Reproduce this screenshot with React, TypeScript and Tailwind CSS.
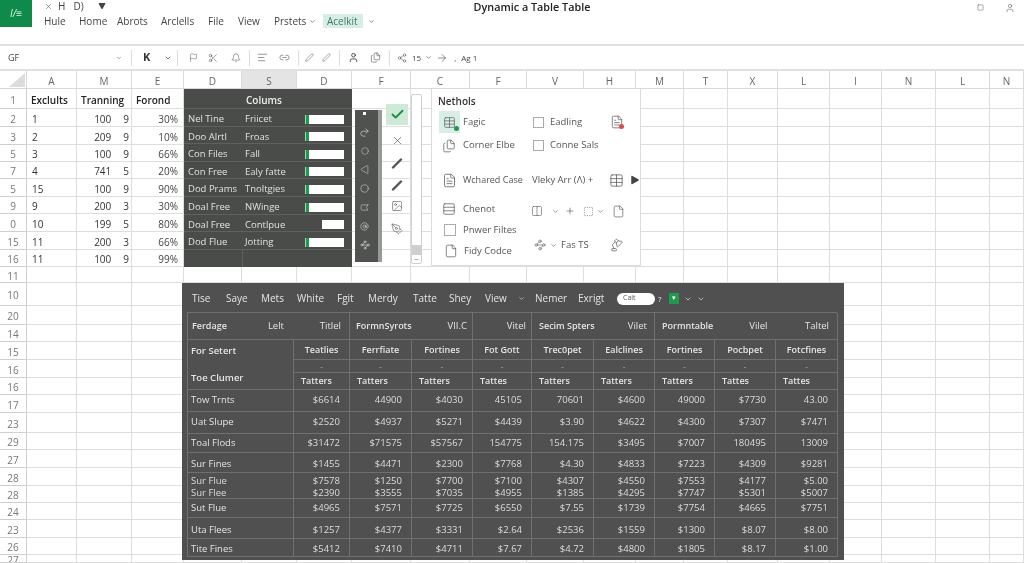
import React from "react";
import {
  AtSign, Check, ChevronDown, Circle, Columns2, File, FileText, Files, Flag, Image, LampDesk, Pen, PenTool,
  Plus, Redo2, Share2, SquareDashed, Table, Triangle, X, ArrowRight, AlignLeft, Link2, Scissors, User,
  Waypoints, Bell, Minus, Square, Bookmark, Rows3,
} from "lucide-react";

const letters = ["A","M","E","D","S","D","F","C","F","V","H","M","T","X","L","I","N","L","N"];
const labels = ["1","2","3","5","7","5","9","0","15","16","11","10","20","14","15","16","16","17","23","29","27","28","28","24","23","26","27"];
const sheet: string[][] = [
  ["Exclults","Tranning","Forond"],
  ["1","100|9","30%"],["2","209|9","10%"],["3","100|9","66%"],["4","741|5","20%"],
  ["15","100|9","90%"],["9","200|3","30%"],["10","199|5","80%"],["11","200|3","66%"],["11","100|9","99%"],
];

const panelRows = [
  ["Nel Tine","Friicet",1],["Doo Alrtl","Froas",1],["Con Files","Fall",1],["Con Free","Ealy fatte",1],
  ["Dod Prams","Tnoltgies",1],["Doal Free","NWinge",1],["Doal Free","Contlpue",0],["Dod Flue","Jotting",1],
] as [string,string,number][];

const money = [
  ["Tow Trnts","$6614","44900","$4030","45105","70601","$4600","49000","$7730","43.00"],
  ["Uat Slupe","$2520","$4937","$5271","$4439","$3.90","$4622","$4300","$7307","$7471"],
  ["Toal Flods","$31472","$71575","$57567","154775","154.175","$3495","$7007","180495","13009"],
  ["Sur Fines","$1455","$4471","$2300","$7768","$4.30","$4833","$7223","$4309","$9281"],
];
const money2 = [
  ["Sut Flue","$4965","$7571","$7725","$6550","$7.55","$1739","$7754","$4665","$7751"],
  ["Uta Flees","$1257","$4377","$3331","$2.64","$2536","$1559","$1300","$8.07","$8.00"],
  ["Tite Fines","$5412","$7410","$4711","$7.67","$4.72","$4800","$1805","$8.17","$1.00"],
];
const dbl1 = ["Sur Flue","$7578","$1250","$7700","$7100","$4307","$4550","$7553","$4177","$5.00"];
const dbl2 = ["Sur Flee","$2390","$3555","$7035","$4955","$1385","$4295","$7747","$5301","$5007"];
const subHead = ["Teatlies","Ferrfiate","Fortines","Fot Gott","Trec0pet","Ealclines","Fortines","Pocbpet","Fotcfines"];
const line = "border-r border-b border-[#6f716f]";

function Row({ cells, h }: { cells: string[]; h: string }) {
  return (
    <>
      {cells.map((c, i) => (
        <div key={i} className={`${line} ${h} flex items-center ${i === 0 ? "pl-[3px] justify-start text-[#e4e4e4]" : "pr-[9px] justify-end text-[#dcdcdc]"}`}>{c}</div>
      ))}
    </>
  );
}

function Stroke() {
  return (
    <svg width="12" height="12" viewBox="0 0 12 12" fill="none">
      <path d="M2 10.5 L10 2.5" stroke="#555" strokeWidth="2.4" strokeLinecap="round" />
    </svg>
  );
}

export default function App() {
  return (
    <div className="relative h-[563px] w-[1024px] overflow-hidden bg-white font-['Open_Sans','Liberation_Sans',sans-serif] text-[#333] blur-[0.4px]">
      {/* Title area */}
      <header className="flex h-[46px] border-b-2 border-[#e0e0e0]">
        <div className="flex h-[27px] w-[32px] items-center justify-center bg-[#0e8a4b] text-[10px] italic text-[#d8f5e4]">I/≡</div>
        <div className="ml-[12px] flex flex-1 flex-col">
          <div className="flex h-[12px] items-center">
            <X size={9} strokeWidth={1.2} className="text-[#333]" />
            <span className="ml-[5px] text-[10px] leading-none text-[#444]">H</span>
            <span className="ml-[8px] text-[10px] leading-none text-[#444]">D)</span>
            <Triangle size={8} fill="#444" strokeWidth={0} className="ml-[14px] rotate-180 text-[#444]" />
            <span className="ml-[368px] mt-[3px] text-[10.8px] font-semibold leading-none text-[#222]">Dynamic a Table Table</span>
            <Square size={7} strokeWidth={1.5} className="ml-[387px] mt-[3px] text-[#444]" />
            <User size={10} strokeWidth={1.2} className="ml-[21px] mt-[3px] text-[#444]" />
          </div>
          <nav className="mt-[2px] flex h-[14px] items-center text-[10px] text-[#444]">
            <span className="w-[35px]">Hule</span>
            <span className="w-[38px]">Home</span>
            <span className="w-[44px]">Abrots</span>
            <span className="w-[47px]">Arclells</span>
            <span className="w-[30px]">File</span>
            <span className="w-[36px]">View</span>
            <span className="flex w-[49px] items-center">Prstets<ChevronDown size={7} className="ml-[3px]" /></span>
            <span className="flex h-[14px] w-[40px] items-center bg-[#d6eee5] pl-[4px] text-[#3b7a63]">Acelkit</span>
            <ChevronDown size={7} className="ml-[5px]" />
          </nav>
        </div>
      </header>

      {/* Formula toolbar */}
      <div className="flex h-[23px] items-center text-[#444]">
        <span className="ml-[8px] w-[108px] text-[9px]">GF</span>
        <ChevronDown size={6} />
        <span className="ml-[9px] h-[16px] w-px bg-[#ddd]" />
        <span className="ml-[11px] w-[21px] text-[11px] font-bold text-[#333]">K</span>
        <ChevronDown size={8} />
        <span className="ml-[5px] h-[16px] w-px bg-[#ddd]" />
        <Flag size={9} strokeWidth={1.2} className="ml-[11px]" />
        <Scissors size={10} strokeWidth={1.2} className="ml-[10px]" />
        <Bell size={10} strokeWidth={1.2} className="ml-[13px]" />
        <span className="ml-[8px] h-[16px] w-px bg-[#ddd]" />
        <AlignLeft size={11} strokeWidth={1.2} className="ml-[7px]" />
        <Link2 size={11} strokeWidth={1.2} className="ml-[11px]" />
        <span className="ml-[8px] h-[16px] w-px bg-[#ddd]" />
        <Pen size={9} strokeWidth={1.2} className="ml-[6px]" />
        <Pen size={9} strokeWidth={1.2} className="ml-[8px]" />
        <span className="ml-[8px] h-[16px] w-px bg-[#ddd]" />
        <User size={11} strokeWidth={1.8} className="ml-[8px] text-[#333]" />
        <Files size={11} strokeWidth={1.2} className="ml-[11px]" />
        <span className="ml-[8px] h-[16px] w-px bg-[#ddd]" />
        <Share2 size={10} strokeWidth={1.2} className="ml-[7px]" />
        <span className="ml-[5px] text-[8px]">15</span>
        <ChevronDown size={7} className="ml-[4px]" />
        <ArrowRight size={12} strokeWidth={1.2} className="ml-[4px]" />
        <span className="ml-[6px] text-[8px]">,</span>
        <span className="ml-[5px] text-[8px]">Ag 1</span>
      </div>

      {/* Sheet */}
      <div className="grid grid-cols-[27px_50px_55px_52px_58px_55px_55px_59px_59px_57px_57px_52px_48px_44px_50px_52px_52px_54px_54px_34px] grid-rows-[18px_20px_18px_18px_17px_17px_18px_17px_18px_18px_17px_16px_23px_19px_17px_18px_18px_17px_18px_20px_17px_18px_18px_17px_17px_18px_17px_8px] border-t-2 border-[#e0e0e0]">
        <div className="flex items-end justify-end border-r border-b border-[#d4d4d4] pb-[1px] pr-[1px]">
          <svg width="16" height="14" viewBox="0 0 16 14"><path d="M16 0V14H0Z" fill="#dcdcdc" /></svg>
        </div>
        {letters.map((l, i) => (
          <div key={i} className={`flex items-center justify-center border-r border-b border-[#d9d9d9] pt-[3px] text-[10px] text-[#666] ${i === 4 ? "bg-[#e4e4e4]" : ""}`}>{l}</div>
        ))}
        {labels.map((lab, r) => (
          <React.Fragment key={r}>
            <div className="flex items-center justify-center overflow-hidden border-r border-b border-[#cfcfcf] pt-[3px] text-[10px] text-[#777]">{lab}</div>
            {letters.map((_, c) => {
              const v = sheet[r]?.[c];
              const head = r === 0;
              return (
                <div key={c} className={`flex items-center overflow-hidden whitespace-nowrap border-b border-r border-[#dedede] pt-[3px] text-[10px] ${head ? "pl-[4px] font-semibold text-[#222]" : c === 2 ? "justify-end pr-[5px] text-[#444]" : "pl-[5px] text-[#333]"}`}>
                  {v && v.includes("|") ? (
                    <span className="flex w-full justify-end gap-[12px] pr-[2px]"><span>{v.split("|")[0]}</span><span>{v.split("|")[1]}</span></span>
                  ) : v}
                </div>
              );
            })}
          </React.Fragment>
        ))}
      </div>

      {/* Columns panel */}
      <section className="absolute left-[184px] top-[89px] w-[168px] bg-[#4a4c4a] text-[10px] text-[#dfe2df]">
        <div className="flex h-[20px] items-center justify-center border-b border-[#5f615f] pr-[8px] pt-[3px] font-semibold text-[#eee]">Colums</div>
        {panelRows.map(([a, b, g], i) => (
          <div key={i} className="grid h-[17.6px] grid-cols-[59px_62px_47px] items-center border-b border-[#5f615f] pt-[3px]">
            <span className="pl-[4px] whitespace-nowrap text-[9.5px]">{a}</span>
            <span className="pl-[2px] whitespace-nowrap text-[9.5px]">{b}</span>
            {g ? (
              <span className="flex h-[9px] w-[39px] bg-white"><span className="h-full w-[4px] border-l border-[#9ed8ae] bg-[#1d9a4b]" /></span>
            ) : (
              <span className="ml-[17px] h-[9px] w-[22px] bg-white" />
            )}
          </div>
        ))}
        <div className="grid h-[17px] grid-cols-[59px_1fr]"><span className="border-r border-[#5f615f]" /></div>
      </section>

      {/* Vertical dark tools */}
      <aside className="absolute left-[355px] top-[110px] flex h-[152px] w-[27px] flex-col items-center border-r-4 border-[#999] bg-[#505250] pr-[4px] pt-[2px] text-[#e6e6e6]">
        <span className="h-[3px] w-[3px] bg-white" />
        <Redo2 size={11} strokeWidth={1.3} className="mt-[12px]" />
        <Circle size={8} strokeWidth={1.3} className="mt-[9px]" />
        <Triangle size={9} strokeWidth={1.3} className="mt-[10px] -rotate-90" />
        <Circle size={9} strokeWidth={1.3} className="mt-[10px]" />
        <Bookmark size={9} strokeWidth={1.3} className="mt-[10px] -rotate-90" />
        <AtSign size={9} strokeWidth={1.4} className="mt-[10px]" />
        <Waypoints size={10} strokeWidth={1.3} className="mt-[9px]" />
      </aside>

      {/* Action strip */}
      <aside className="absolute left-[386px] top-[104px] flex w-[22px] flex-col items-center text-[#555]">
        <div className="flex h-[21px] w-[22px] items-center justify-center bg-[#cfe9d8]"><Check size={15} strokeWidth={3} className="text-[#16913f]" /></div>
        <X size={13} strokeWidth={1.2} className="mt-[9px]" />
        <span className="mt-[10px]"><Stroke /></span>
        <span className="mt-[10px]"><Stroke /></span>
        <Image size={12} strokeWidth={1.2} className="mt-[9px]" />
        <PenTool size={12} strokeWidth={1.2} className="mt-[11px]" />
      </aside>

      {/* Scrollbar */}
      <div className="absolute left-[411px] top-[94px] flex h-[170px] w-[11px] flex-col justify-end rounded-[2px] border border-[#d0d0d0] bg-white">
        <div className="h-[10px] bg-[#cfcfcf]" />
        <div className="flex h-[8px] items-center justify-center"><Minus size={5} /></div>
      </div>

      {/* Methods panel */}
      <section className="absolute left-[431px] top-[89px] h-[177px] w-[210px] border-r border-b border-l border-[#dcdcdc] bg-white pt-[5px] text-[9.5px] text-[#555]">
        <h2 className="ml-[6px] h-[17px] text-[10px] font-semibold text-[#333]">Nethols</h2>
        <div className="flex">
          <div className="w-[99px] shrink-0">
            <div className="flex h-[22px] items-center">
              <span className="relative ml-[7px] flex h-[22px] w-[21px] items-center justify-center bg-[#d7efe5]">
                <Table size={13} strokeWidth={1.2} />
                <span className="absolute bottom-[2px] right-[1px] h-[5px] w-[5px] rounded-full bg-[#1d9a4b]" />
              </span>
              <span className="ml-[3px]">Fagic</span>
            </div>
            <div className="flex h-[25px] items-center pl-[10px]">
              <Files size={14} strokeWidth={1.2} /><span className="ml-[7px] whitespace-nowrap">Corner Elbe</span>
            </div>
            <div className="flex h-[44px] items-center pl-[10px]">
              <FileText size={15} strokeWidth={1.2} /><span className="ml-[6px] whitespace-nowrap text-[9px]">Wchared Case</span>
            </div>
            <div className="flex h-[14px] items-center pl-[10px]">
              <Rows3 size={14} strokeWidth={1.2} /><span className="ml-[7px]">Chenot</span>
            </div>
            <div className="flex h-[28px] items-center pl-[12px]">
              <span className="h-[12px] w-[12px] border border-[#aaa]" /><span className="ml-[7px] whitespace-nowrap">Pnwer Filtes</span>
            </div>
            <div className="flex h-[14px] items-center pl-[12px]">
              <File size={14} strokeWidth={1.2} /><span className="ml-[6px] whitespace-nowrap">Fidy Codce</span>
            </div>
          </div>
          <div className="flex-1">
            <div className="flex h-[22px] items-center pl-[2px]">
              <span className="h-[11px] w-[11px] border border-[#aaa]" />
              <span className="ml-[6px] w-[60px]">Eadling</span>
              <span className="relative"><FileText size={14} strokeWidth={1.2} /><span className="absolute bottom-0 right-0 h-[5px] w-[5px] rounded-full bg-[#e5484d]" /></span>
            </div>
            <div className="flex h-[25px] items-center pl-[2px]">
              <span className="h-[11px] w-[11px] border border-[#aaa]" />
              <span className="ml-[6px]">Conne Sals</span>
            </div>
            <div className="flex h-[44px] items-center pl-[1px]">
              <span className="w-[77px] whitespace-nowrap text-[9.5px]">Vleky Arr (Λ) +</span>
              <Table size={15} strokeWidth={1.2} />
              <Triangle size={10} fill="#444" strokeWidth={0} className="ml-[6px] rotate-90" />
            </div>
            <div className="flex h-[18px] items-center">
              <Columns2 size={12} strokeWidth={1.2} />
              <ChevronDown size={7} className="ml-[9px]" />
              <Plus size={10} strokeWidth={1.5} className="ml-[6px]" />
              <SquareDashed size={11} strokeWidth={1.2} className="ml-[8px]" />
              <ChevronDown size={7} className="ml-[3px]" />
              <File size={13} strokeWidth={1.2} className="ml-[8px]" />
            </div>
            <div className="mt-[16px] flex h-[18px] items-center pl-[3px]">
              <Waypoints size={12} strokeWidth={1.2} />
              <ChevronDown size={7} className="ml-[4px]" />
              <span className="ml-[4px] w-[49px] text-[9.5px]">Fas TS</span>
              <LampDesk size={14} strokeWidth={1.2} />
            </div>
          </div>
        </div>
      </section>

      {/* Dark pivot table */}
      <section className="absolute left-[182px] top-[283px] h-[277px] w-[662px] bg-[#4f504f] pl-[5px] text-[9.5px] text-[#e4e4e4]">
        <div className="flex h-[29px] items-center pl-[5px] pt-[2px] text-[10px]">
          <span className="w-[34px]">Tise</span><span className="w-[35px]">Saye</span><span className="w-[36px]">Mets</span>
          <span className="w-[40px]">White</span><span className="w-[31px]">Fgit</span><span className="w-[45px]">Merdy</span>
          <span className="w-[36px]">Tatte</span><span className="w-[36px]">Shey</span><span className="w-[33px]">View</span>
          <span className="w-[17px]"><ChevronDown size={7} /></span><span className="w-[43px]">Nemer</span><span className="w-[39px]">Exrigt</span>
          <span className="flex h-[12px] w-[38px] items-center rounded-full bg-white pl-[6px] text-[7px] text-[#555]">Calt</span>
          <span className="ml-[3px] w-[11px] text-[8px]">?</span>
          <span className="flex h-[11px] w-[10px] items-center justify-center bg-[#1d9a4b] text-[7px] text-white">▾</span>
          <ChevronDown size={8} className="ml-[5px]" /><ChevronDown size={8} className="ml-[5px]" />
        </div>
        <div className="grid w-[650px] grid-cols-[106px_56px_62px_61px_59px_62px_61px_60px_61px_62px] border-t border-l border-[#6f716f]">
          <div className={`${line} col-span-2 flex h-[27px] items-center pl-[4px] pr-[8px]`}><b className="text-[9px] font-semibold">Ferdage</b><span className="ml-[41px]">Lelt</span><span className="ml-auto">Titlel</span></div>
          <div className={`${line} col-span-2 flex h-[27px] items-center justify-between pl-[6px] pr-[5px]`}><b className="text-[9px] font-semibold">FormnSyrots</b><span>VII.C</span></div>
          <div className={`${line} flex h-[27px] items-center justify-end pr-[5px]`}>Vitel</div>
          <div className={`${line} col-span-2 flex h-[27px] items-center justify-between pl-[7px] pr-[7px]`}><b className="text-[9px] font-semibold">Secim Spters</b><span>Vilet</span></div>
          <div className={`${line} col-span-3 flex h-[27px] items-center pl-[7px] pr-[8px]`}><b className="text-[9px] font-semibold">Pormntable</b><span className="ml-[36px]">Vilel</span><span className="ml-auto">Taltel</span></div>

          <div className={`${line} row-span-3 flex h-[50px] flex-col justify-between py-[4px] pl-[3px] font-semibold`}><span>For Setert</span><span>Toe Clumer</span></div>
          {subHead.map((s, i) => (
            <div key={i} className={`${line} flex h-[20px] items-center justify-center whitespace-nowrap text-[9px] font-semibold`}>{s}</div>
          ))}
          {subHead.map((_, i) => (
            <div key={i} className={`${line} flex h-[13px] items-center justify-center text-[8px] text-[#bbb]`}>-</div>
          ))}
          {subHead.map((_, i) => (
            <div key={i} className={`${line} flex h-[17px] items-center pl-[7px] text-[9px] font-semibold`}>{i === 3 || i === 7 || i === 8 ? "Tattes" : "Tatters"}</div>
          ))}
          <Row cells={money[0]} h="h-[22px]" />
          <Row cells={money[1]} h="h-[22px]" />
          <Row cells={money[2]} h="h-[19px]" />
          <Row cells={money[3]} h="h-[20px] pt-[3px]" />
          {dbl1.map((v, i) => (
            <div key={i} className={`${line} flex h-[26px] flex-col pt-[2px] ${i === 0 ? "items-start pl-[3px]" : "items-end pr-[9px]"} justify-center leading-[12px] text-[#dcdcdc]`}><span>{v}</span><span>{dbl2[i]}</span></div>
          ))}
          <Row cells={money2[0]} h="h-[19px]" />
          <Row cells={money2[1]} h="h-[21px] pt-[4px]" />
          <Row cells={money2[2]} h="h-[18px] pt-[3px]" />
        </div>
      </section>
    </div>
  );
}
